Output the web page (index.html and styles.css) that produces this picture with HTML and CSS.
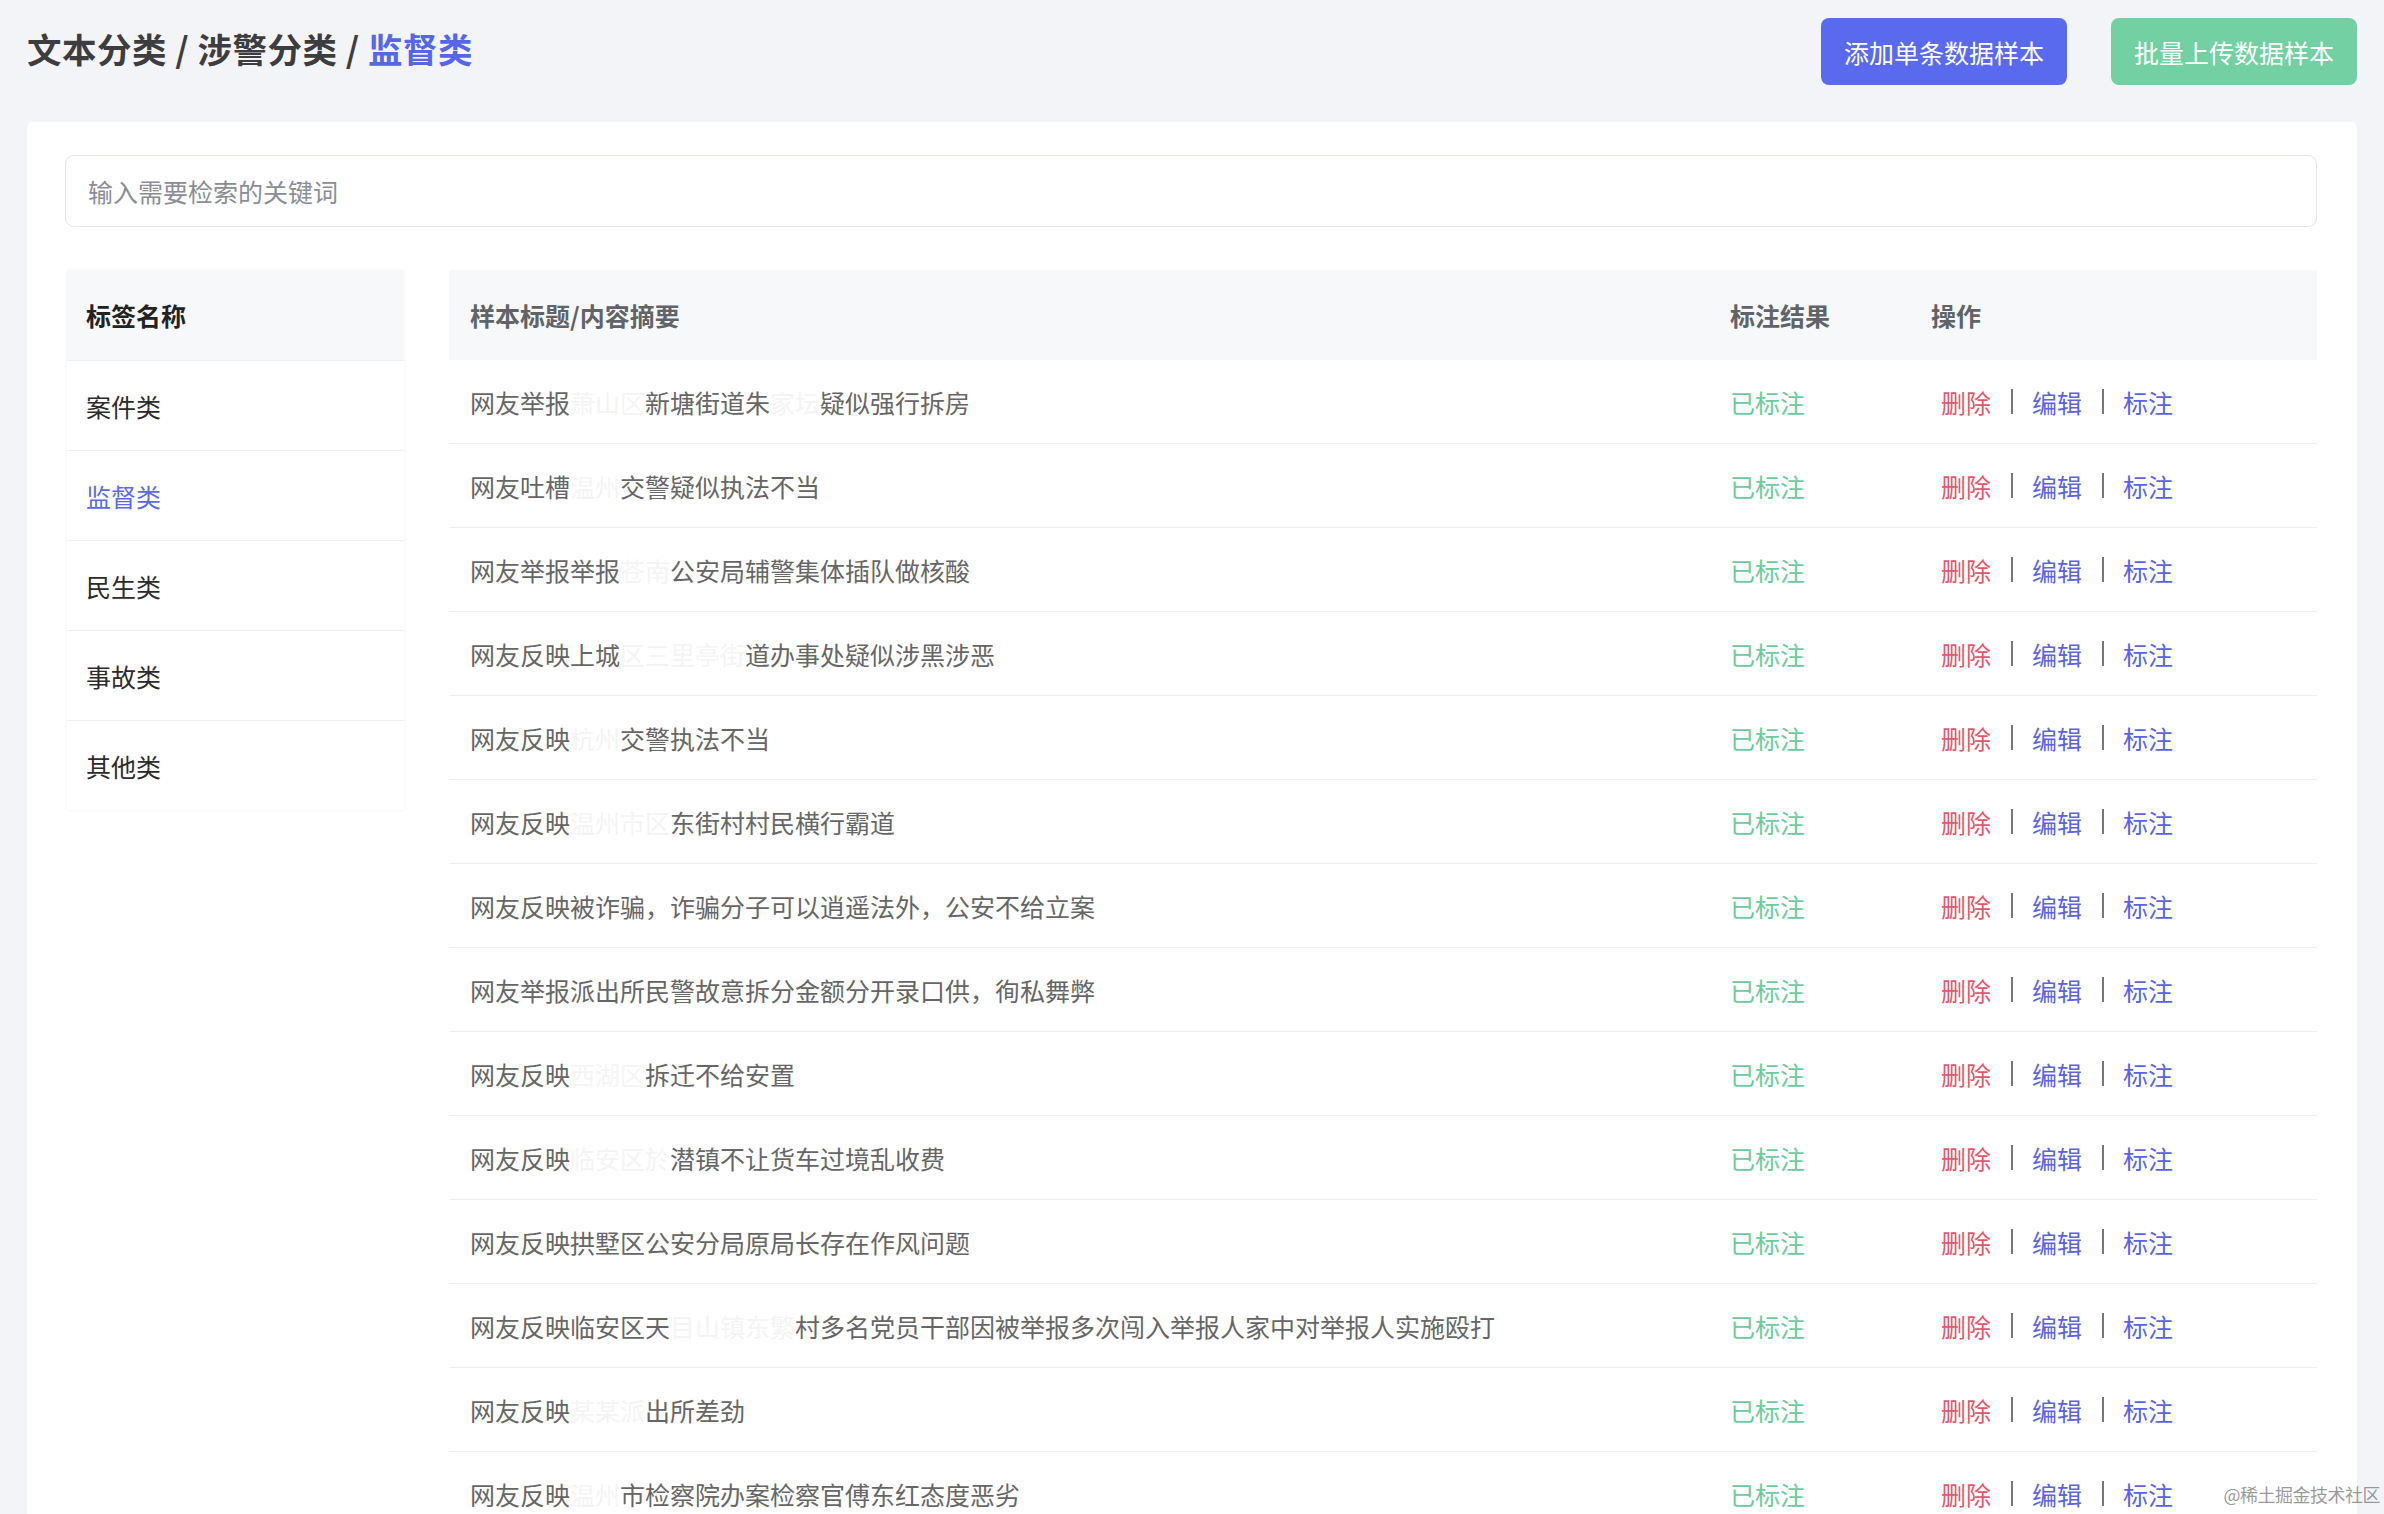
FILE: index.html
```html
<!DOCTYPE html>
<html lang="zh-CN">
<head>
<meta charset="utf-8">
<title>监督类</title>
<link rel="stylesheet" href="styles.css">
</head>
<body>
<div class="topbar">
  <div class="crumbs">文本分类 / 涉警分类 / <span class="crumb-current">监督类</span></div>
  <div class="actions">
    <button class="btn btn-blue">添加单条数据样本</button>
    <button class="btn btn-green">批量上传数据样本</button>
  </div>
</div>
<div class="card">
  <div class="search">输入需要检索的关键词</div>
  <div class="panels">
    <div class="tags">
      <div class="tags-head">标签名称</div>
      <div class="tag">案件类</div>
      <div class="tag active">监督类</div>
      <div class="tag">民生类</div>
      <div class="tag">事故类</div>
      <div class="tag">其他类</div>
    </div>
    <div class="table">
      <div class="tr th">
        <div class="c1">样本标题/内容摘要</div>
        <div class="c2">标注结果</div>
        <div class="c3">操作</div>
      </div>
      <div class="tr"><div class="c1">网友举报<span class="mask">萧山区</span>新塘街道朱<span class="mask">家坛</span>疑似强行拆房</div><div class="c2 ok">已标注</div><div class="c3 ops"><span class="del">删除</span><i class="sep"></i><span class="lk">编辑</span><i class="sep"></i><span class="lk">标注</span></div></div>
      <div class="tr"><div class="c1">网友吐槽<span class="mask">温州</span>交警疑似执法不当</div><div class="c2 ok">已标注</div><div class="c3 ops"><span class="del">删除</span><i class="sep"></i><span class="lk">编辑</span><i class="sep"></i><span class="lk">标注</span></div></div>
      <div class="tr"><div class="c1">网友举报举报<span class="mask">苍南</span>公安局辅警集体插队做核酸</div><div class="c2 ok">已标注</div><div class="c3 ops"><span class="del">删除</span><i class="sep"></i><span class="lk">编辑</span><i class="sep"></i><span class="lk">标注</span></div></div>
      <div class="tr"><div class="c1">网友反映上城<span class="mask">区三里亭街</span>道办事处疑似涉黑涉恶</div><div class="c2 ok">已标注</div><div class="c3 ops"><span class="del">删除</span><i class="sep"></i><span class="lk">编辑</span><i class="sep"></i><span class="lk">标注</span></div></div>
      <div class="tr"><div class="c1">网友反映<span class="mask">杭州</span>交警执法不当</div><div class="c2 ok">已标注</div><div class="c3 ops"><span class="del">删除</span><i class="sep"></i><span class="lk">编辑</span><i class="sep"></i><span class="lk">标注</span></div></div>
      <div class="tr"><div class="c1">网友反映<span class="mask">温州市区</span>东街村村民横行霸道</div><div class="c2 ok">已标注</div><div class="c3 ops"><span class="del">删除</span><i class="sep"></i><span class="lk">编辑</span><i class="sep"></i><span class="lk">标注</span></div></div>
      <div class="tr"><div class="c1">网友反映被诈骗，诈骗分子可以逍遥法外，公安不给立案</div><div class="c2 ok">已标注</div><div class="c3 ops"><span class="del">删除</span><i class="sep"></i><span class="lk">编辑</span><i class="sep"></i><span class="lk">标注</span></div></div>
      <div class="tr"><div class="c1">网友举报派出所民警故意拆分金额分开录口供，徇私舞弊</div><div class="c2 ok">已标注</div><div class="c3 ops"><span class="del">删除</span><i class="sep"></i><span class="lk">编辑</span><i class="sep"></i><span class="lk">标注</span></div></div>
      <div class="tr"><div class="c1">网友反映<span class="mask">西湖区</span>拆迁不给安置</div><div class="c2 ok">已标注</div><div class="c3 ops"><span class="del">删除</span><i class="sep"></i><span class="lk">编辑</span><i class="sep"></i><span class="lk">标注</span></div></div>
      <div class="tr"><div class="c1">网友反映<span class="mask">临安区於</span>潜镇不让货车过境乱收费</div><div class="c2 ok">已标注</div><div class="c3 ops"><span class="del">删除</span><i class="sep"></i><span class="lk">编辑</span><i class="sep"></i><span class="lk">标注</span></div></div>
      <div class="tr"><div class="c1">网友反映拱墅区公安分局原局长存在作风问题</div><div class="c2 ok">已标注</div><div class="c3 ops"><span class="del">删除</span><i class="sep"></i><span class="lk">编辑</span><i class="sep"></i><span class="lk">标注</span></div></div>
      <div class="tr"><div class="c1">网友反映临安区天<span class="mask">目山镇东繁</span>村多名党员干部因被举报多次闯入举报人家中对举报人实施殴打</div><div class="c2 ok">已标注</div><div class="c3 ops"><span class="del">删除</span><i class="sep"></i><span class="lk">编辑</span><i class="sep"></i><span class="lk">标注</span></div></div>
      <div class="tr"><div class="c1">网友反映<span class="mask">某某派</span>出所差劲</div><div class="c2 ok">已标注</div><div class="c3 ops"><span class="del">删除</span><i class="sep"></i><span class="lk">编辑</span><i class="sep"></i><span class="lk">标注</span></div></div>
      <div class="tr"><div class="c1">网友反映<span class="mask">温州</span>市检察院办案检察官傅东红态度恶劣</div><div class="c2 ok">已标注</div><div class="c3 ops"><span class="del">删除</span><i class="sep"></i><span class="lk">编辑</span><i class="sep"></i><span class="lk">标注</span></div></div>
    </div>
  </div>
</div>
<div class="watermark">@稀土掘金技术社区</div>
</body>
</html>
```
FILE: styles.css
```css
html, body {
  margin: 0;
  padding: 0;
  overflow: hidden;
  height: 100%;
}
body {
  background: #f3f4f8;
  font-family: "Noto Sans CJK SC", "Noto Sans", sans-serif;
  color: #333;
  position: relative;
}
.topbar {
  display: flex;
  align-items: center;
  justify-content: space-between;
  padding: 18px 27px 0 27px;
  height: 67px;
  margin-bottom: 37px;
}
.crumbs {
  font-size: 34.5px;
  font-weight: 700;
  color: #3d3d40;
  letter-spacing: 0.5px;
  margin-top: -7px;
}
.crumb-current {
  color: #5566ea;
}
.actions {
  display: flex;
  gap: 44px;
}
.btn {
  width: 246px;
  height: 67px;
  border: none;
  border-radius: 8px;
  color: #fff;
  font-family: "Noto Sans CJK SC", sans-serif;
  font-size: 25px;
  padding: 0;
}
.btn-blue { background: #5a6aee; }
.btn-green { background: #72d0a3; }
.card {
  margin: 0 27px;
  background: #fff;
  border-radius: 6px 6px 0 0;
  padding: 33px 40px 0 38px;
  height: 1400px;
}
.search {
  height: 70px;
  border: 1.5px solid #e3e6ec;
  border-radius: 9px;
  padding-left: 22px;
  display: flex;
  align-items: center;
  font-size: 25px;
  color: #8a8d93;
}
.panels {
  display: flex;
  margin-top: 43px;
  gap: 45px;
  padding-left: 2px;
}
.tags {
  width: 337px;
  flex: none;
  align-self: flex-start;
  box-shadow: 0 0 3px rgba(0, 0, 0, 0.06);
}
.tags-head {
  height: 90px;
  background: #f7f8fa;
  display: flex;
  align-items: center;
  padding-left: 19px;
  font-size: 25px;
  font-weight: 700;
  color: #222;
}
.tag {
  height: 89px;
  border-top: 1px solid #f0f1f3;
  display: flex;
  align-items: center;
  padding-left: 19px;
  font-size: 25px;
  color: #2b2b2b;
}
.tag.active {
  color: #5a6ae8;
}
.table {
  flex: 1;
}
.tr {
  display: grid;
  grid-template-columns: 1281px 201px 1fr;
  align-items: center;
  height: 83px;
  border-bottom: 1px solid #eceef2;
  font-size: 25px;
  color: #666;
}
.tr.th {
  height: 90px;
  background: #f7f8fa;
  border-bottom: none;
  font-weight: 700;
  color: #606368;
  font-size: 25px;
}
.c1 {
  padding-left: 21px;
  white-space: nowrap;
}
.mask {
  color: #f4f4f4;
}
.ok {
  color: #6ccb9c;
}
.ops {
  display: flex;
  align-items: center;
  padding-left: 10px;
}
.del {
  color: #e5556b;
}
.lk {
  color: #5a63e4;
}
.sep {
  display: inline-block;
  width: 2px;
  height: 25px;
  background: #777;
  margin: 0 19px 0 20px;
}
.watermark {
  position: absolute;
  right: 4px;
  top: 1481px;
  font-size: 18px;
  color: rgba(120, 120, 120, 0.75);
  letter-spacing: -0.5px;
}
```
